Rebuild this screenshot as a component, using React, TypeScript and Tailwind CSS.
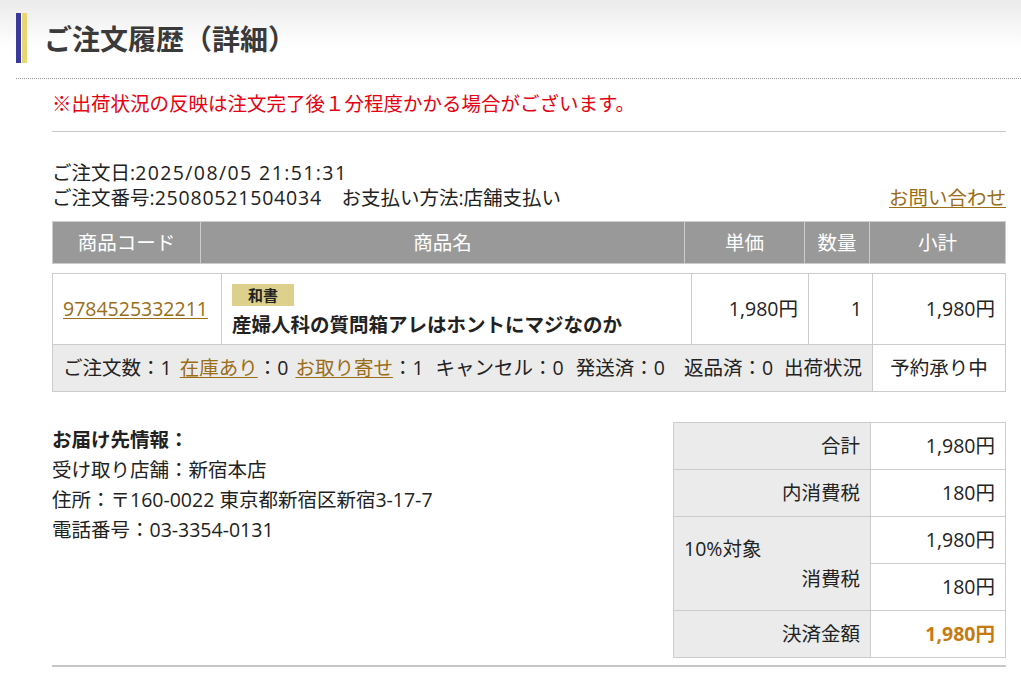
import React from "react";

const font = { fontFamily: '"Open Sans", "Noto Sans CJK JP", sans-serif' };

const summary = [
  { label: "ご注文数", value: "1", gap: "mr-[8px]" },
  { label: "在庫あり", value: "0", link: true, gap: "mr-[7px]" },
  { label: "お取り寄せ", value: "1", link: true, gap: "mr-[12px]" },
  { label: "キャンセル", value: "0", gap: "mr-[12px]" },
  { label: "発送済", value: "0", gap: "mr-[19px]" },
  { label: "返品済", value: "0", gap: "" },
];

export default function App() {
  return (
    <div className="min-h-[677px] bg-white text-[19.5px] text-[#222]" style={font}>
      {/* page title */}
      <div className="bg-gradient-to-b from-[#ebebeb] to-white to-60% pt-[13px] pl-4">
        <div className="flex items-center h-[50px]">
          <div className="flex h-full">
            <div className="w-[5px] bg-[#3a3a9c]" />
            <div className="w-px bg-white" />
            <div className="w-[5px] bg-[#e8d673]" />
          </div>
          <h1 className="ml-[17px] text-[28px] font-bold text-[#3a3a3a]" style={{ fontFamily: '"Noto Sans CJK JP", sans-serif' }}>
            ご注文履歴（詳細）
          </h1>
        </div>
        <div className="mt-[15px] border-b border-dotted border-[#999]" />
      </div>

      <div className="pl-[52px] pr-[15px]">
        <p className="pt-[12px] pb-[14px] text-[#e60012] leading-[26px] border-b border-[#c8c8c8]">
          ※出荷状況の反映は注文完了後１分程度かかる場合がございます。
        </p>

        <div className="mt-[28px] leading-[25px]">
          <div>
            ご注文日:<span className="tracking-[1.4px]">2025/08/05 21:51:31</span>
          </div>
          <div className="flex justify-between">
            <span>
              ご注文番号:<span className="tracking-[0.8px]">25080521504034</span>　お支払い方法:店舗支払い
            </span>
            <a className="text-[#9a6d16] underline underline-offset-2">お問い合わせ</a>
          </div>
        </div>

        {/* header table */}
        <table className="mt-[11px] w-full border-collapse text-white">
          <thead>
            <tr className="h-[42px] bg-[#999]">
              <th className="w-[148px] font-normal border border-[#ccc]">商品コード</th>
              <th className="w-[484px] font-normal border border-[#ccc]">商品名</th>
              <th className="w-[120px] font-normal border border-[#ccc]">単価</th>
              <th className="w-[65px] font-normal border border-[#ccc]">数量</th>
              <th className="font-normal border border-[#ccc]">小計</th>
            </tr>
          </thead>
        </table>

        {/* item table */}
        <table className="mt-[9px] w-full border-collapse">
          <tbody>
            <tr className="h-[71px]">
              <td className="w-[169px] px-[10px] border border-[#ccc]">
                <a className="text-[#9a6d16] underline underline-offset-2">9784525332211</a>
              </td>
              <td className="w-[470px] px-[10px] border border-[#ccc]">
                <div className="inline-block bg-[#dcd08c] px-[16px] text-[15px] font-bold leading-[22px]">和書</div>
                <div className="font-bold leading-[28px] mt-[2px]">産婦人科の質問箱アレはホントにマジなのか</div>
              </td>
              <td className="w-[117px] px-[10px] text-right border border-[#ccc]">1,980円</td>
              <td className="w-[64px] px-[10px] text-right border border-[#ccc]">1</td>
              <td className="px-[10px] text-right border border-[#ccc]">1,980円</td>
            </tr>
            <tr className="h-[47px]">
              <td colSpan={4} className="px-[10px] bg-[#ebebeb] border border-[#ccc]">
                <div className="flex justify-between">
                  <div className="flex">
                    {summary.map((s) => (
                      <span key={s.label} className={s.gap}>
                        {s.link ? (
                          <a className="text-[#9a6d16] underline underline-offset-2">{s.label}</a>
                        ) : (
                          s.label
                        )}
                        ：{s.value}
                      </span>
                    ))}
                  </div>
                  <span>出荷状況</span>
                </div>
              </td>
              <td className="text-center border border-[#ccc]">予約承り中</td>
            </tr>
          </tbody>
        </table>

        {/* bottom */}
        <div className="mt-[30px] flex justify-between items-start">
          <div className="pt-[3px] leading-[30px]">
            <div className="font-bold">お届け先情報：</div>
            <div>受け取り店舗：新宿本店</div>
            <div>住所：〒160-0022 東京都新宿区新宿3-17-7</div>
            <div>電話番号：03-3354-0131</div>
          </div>
          <table className="w-[333px] border-collapse">
            <tbody>
              <tr className="h-[47px]">
                <td className="w-[197px] px-[10px] bg-[#ebebeb] text-right border border-[#ccc]">合計</td>
                <td className="px-[10px] text-right border border-[#ccc]">1,980円</td>
              </tr>
              <tr className="h-[47px]">
                <td className="px-[10px] bg-[#ebebeb] text-right border border-[#ccc]">内消費税</td>
                <td className="px-[10px] text-right border border-[#ccc]">180円</td>
              </tr>
              <tr className="h-[47px]">
                <td rowSpan={2} className="px-[10px] bg-[#ebebeb] border border-[#ccc] leading-[30px]">
                  <div>10%対象</div>
                  <div className="text-right">消費税</div>
                </td>
                <td className="px-[10px] text-right border border-[#ccc]">1,980円</td>
              </tr>
              <tr className="h-[47px]">
                <td className="px-[10px] text-right border border-[#ccc]">180円</td>
              </tr>
              <tr className="h-[47px]">
                <td className="px-[10px] bg-[#ebebeb] text-right border border-[#ccc]">決済金額</td>
                <td className="px-[10px] text-right border border-[#ccc] font-bold text-[#c77a12]">1,980円</td>
              </tr>
            </tbody>
          </table>
        </div>
        <div className="mt-[7px] border-b-2 border-[#c8c8c8]" />
      </div>
    </div>
  );
}
